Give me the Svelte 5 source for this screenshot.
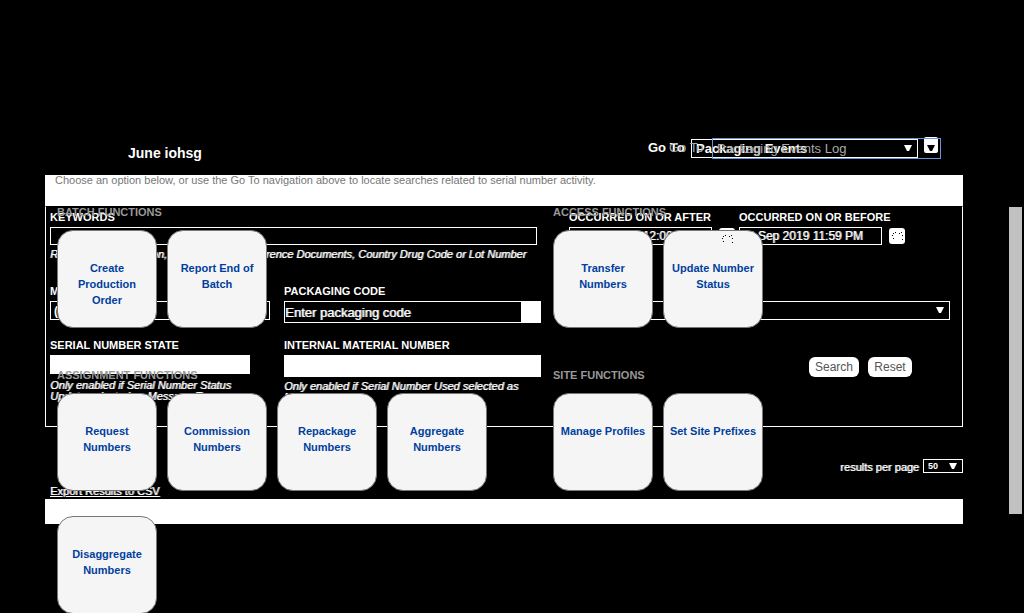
<script>
  const leftGroups = [
    { title: 'BATCH FUNCTIONS', items: ['Create Production Order', 'Report End of Batch'] },
    {
      title: 'ASSIGNMENT FUNCTIONS',
      items: ['Request Numbers', 'Commission Numbers', 'Repackage Numbers', 'Aggregate Numbers', 'Disaggregate Numbers']
    }
  ];
  const rightGroups = [
    { title: 'ACCESS FUNCTIONS', items: ['Transfer Numbers', 'Update Number Status'] },
    { title: 'SITE FUNCTIONS', items: ['Manage Profiles', 'Set Site Prefixes'] }
  ];
  const columns = [leftGroups, rightGroups];
</script>

{#snippet arrow()}
  <svg class="arrow" width="8" height="7" viewBox="0 0 8 7" aria-hidden="true"><path d="M0 0H8L5 6H3Z" fill="currentColor" /></svg>
{/snippet}

{#snippet dots()}
  <svg class="dots" width="14" height="10" viewBox="0 0 14 10" aria-hidden="true">
    <path d="M3 2h1v1H3zM5 1h1v1H5zM2 4h1v1H2zM9 2h1v1H9zM11 1h1v1h-1zM12 4h1v1h-1zM3 7h1v1H3zM12 8h1v1h-1z" fill="#000" />
  </svg>
{/snippet}

<div class="stage">
  <div class="layer">
    <header>
      <strong class="brand">June iohsg</strong>
      <div class="goto">
        <label for="goto">Go To</label>
        <span class="pick wide"><select id="goto"><option>Packaging Events</option></select>{@render arrow()}</span>
        <button class="go" aria-label="Go"></button>
      </div>
    </header>
    <div class="band"></div>
    <form onsubmit={(e) => e.preventDefault()}>
      <div class="field keywords">
        <label for="kw">KEYWORDS</label>
        <input id="kw" />
        <em>Related Event Location, Types, Status, Reference Documents, Country Drug Code or Lot Number</em>
      </div>
      <div class="dates">
        <div class="field">
          <label for="after">OCCURRED ON OR AFTER</label>
          <span class="date"><input id="after" value="01 Sep 2019 12:00 AM" /><button type="button" class="cal" aria-label="Pick date">{@render dots()}</button></span>
        </div>
        <div class="field">
          <label for="before">OCCURRED ON OR BEFORE</label>
          <span class="date"><input id="before" value="30 Sep 2019 11:59 PM" /><button type="button" class="cal" aria-label="Pick date">{@render dots()}</button></span>
        </div>
      </div>
      <div class="field message">
        <label for="msg">MESSAGE TYPE</label>
        <input id="msg" value="(All)" />
      </div>
      <div class="field code">
        <label for="code">PACKAGING CODE</label>
        <span class="lookup"><input id="code" value="Enter packaging code" /><button type="button" aria-label="Look up"></button></span>
      </div>
      <div class="field status">
        <label for="status">STATUS</label>
        <span class="pick"><select id="status"><option></option></select>{@render arrow()}</span>
      </div>
      <div class="field state">
        <label for="state">SERIAL NUMBER STATE</label>
        <input id="state" class="solid" disabled />
        <em>Only enabled if Serial Number Status<br />Update selected as Message Type</em>
      </div>
      <div class="field material">
        <label for="mat">INTERNAL MATERIAL NUMBER</label>
        <input id="mat" class="solid" disabled />
        <em>Only enabled if Serial Number Used selected as<br />Message Type</em>
      </div>
      <div class="actions">
        <button>Search</button>
        <button type="reset">Reset</button>
      </div>
    </form>
    <div class="paging">
      <label for="count">results per page</label>
      <span class="pick"><select id="count"><option>50</option></select>{@render arrow()}</span>
    </div>
    <a class="export" href="#export">Export Results to CSV</a>
    <div class="bar"></div>
  </div>

  <div class="layer over">
    <div class="goto second">
      <label for="goto2">Go To</label>
      <span class="pick"><select id="goto2"><option>Packaging Events Log</option></select>{@render arrow()}</span>
    </div>
    <p>Choose an option below, or use the Go To navigation above to locate searches related to serial number activity.</p>
    <div class="columns">
      {#each columns as groups}
        <div>
          {#each groups as group}
            <section>
              <h2>{group.title}</h2>
              <div class="tiles">
                {#each group.items as item}
                  <a href="#tile">{item}{#if item === 'Update Number Status'}{@render dots()}{/if}</a>
                {/each}
              </div>
            </section>
          {/each}
        </div>
      {/each}
    </div>
  </div>
  <div class="thumb"></div>
</div>

<style>
  :global(body) {
    background: #000;
    overflow: hidden;
  }
  .stage {
    position: relative;
    display: grid;
    height: 100vh;
    overflow: hidden;
    padding: 137px 61px 0 45px;
    box-sizing: border-box;
    color: #fff;
    font: 11px/16px "Liberation Sans", Arial, sans-serif;
  }
  .stage * {
    box-sizing: border-box;
  }
  .layer {
    grid-area: 1 / 1;
    min-width: 0;
  }
  header {
    display: flex;
    justify-content: space-between;
    height: 38px;
    padding: 0 25px 0 83px;
  }
  .brand {
    font-size: 14px;
    line-height: 32px;
  }
  .goto {
    display: flex;
    align-items: flex-start;
    font-size: 13px;
    line-height: 22px;
  }
  .goto label {
    width: 43px;
  }
  header .goto label {
    font-weight: bold;
  }
  .pick {
    display: grid;
    align-items: center;
    height: 19px;
    border: 1px solid #fff;
  }
  .pick select {
    grid-area: 1 / 1;
    width: 100%;
    height: 100%;
    appearance: none;
    border: 0;
    padding: 0 4px;
    background: transparent;
    color: inherit;
    font: inherit;
    line-height: 16px;
  }
  .arrow {
    grid-area: 1 / 1;
    justify-self: end;
    margin-right: 5px;
    pointer-events: none;
  }
  .wide {
    width: 227px;
    margin-top: 2px;
    font-weight: bold;
  }
  button {
    border: 0;
    padding: 0;
    background: #fff;
    color: #000;
    font: 12px "Liberation Sans", Arial, sans-serif;
  }
  .go {
    width: 14px;
    height: 16px;
    margin-left: 6px;
    border-radius: 2px;
  }
  .band {
    height: 31px;
    background: #fff;
  }
  form {
    display: grid;
    grid-template-columns: 234px 285px 1fr;
    grid-template-rows: 74px 54px 1fr;
    height: 221px;
    padding: 2px 12px 0 4px;
    border: 1px solid #fff;
    border-top-color: #000;
  }
  .field {
    display: flex;
    flex-direction: column;
    align-items: flex-start;
    min-width: 0;
    white-space: nowrap;
  }
  .field label {
    font-weight: bold;
    line-height: 16px;
    margin-bottom: 2px;
  }
  .field em,
  .date input,
  .lookup input,
  .paging label,
  .export {
    text-shadow: 1px 0 0 rgb(255 255 255 / 0.7);
  }
  .field em {
    line-height: 11px;
    padding-top: 4px;
  }
  input {
    height: 18px;
    border: 1px solid #fff;
    border-radius: 0;
    padding: 0 3px;
    background: #000;
    color: #fff;
    font: 12px "Liberation Sans", Arial, sans-serif;
  }
  .keywords {
    grid-column: span 2;
  }
  .keywords input {
    width: calc(100% - 32px);
  }
  .dates {
    display: flex;
    gap: 4px;
  }
  .date {
    display: flex;
    align-items: center;
    gap: 7px;
  }
  .date input {
    width: 143px;
    padding: 0 1px;
  }
  .cal {
    display: grid;
    place-items: center;
    width: 16px;
    height: 16px;
    border-radius: 3px;
  }
  .message input {
    width: calc(100% - 14px);
    height: 19px;
    font-weight: bold;
  }
  .lookup {
    display: flex;
    width: 257px;
  }
  .lookup input {
    flex: 1;
    min-width: 0;
    height: 22px;
    padding: 0;
    font-size: 13px;
  }
  .lookup button {
    width: 19px;
  }
  .status .pick {
    width: 100%;
  }
  .state input {
    width: 200px;
    height: 19px;
  }
  .state em {
    padding-top: 6px;
  }
  .material input {
    width: 257px;
    height: 22px;
  }
  input.solid {
    background: #fff;
  }
  .actions {
    display: flex;
    justify-content: flex-end;
    gap: 9px;
    padding: 20px 38px 0 0;
  }
  .actions button {
    height: 20px;
    width: 50px;
    border-radius: 6px;
    color: #555;
  }
  .actions button + button {
    width: 44px;
  }
  .paging {
    display: flex;
    justify-content: flex-end;
    gap: 4px;
    height: 57px;
    padding-top: 32px;
  }
  .paging .pick {
    width: 40px;
    height: 14px;
    font-size: 9px;
    font-weight: bold;
  }
  .paging select {
    line-height: 12px;
  }
  .export {
    display: block;
    height: 15px;
    padding-left: 5px;
    color: #fff;
    line-height: 14px;
  }
  .bar {
    height: 25px;
    background: #fff;
  }
  .over {
    pointer-events: none;
  }
  .over a,
  .over select {
    pointer-events: auto;
  }
  .second {
    justify-content: flex-end;
    height: 35px;
    padding-right: 22px;
    color: #aaa;
  }
  .second .pick {
    width: 229px;
    height: 21px;
    margin-top: 1px;
    border-color: #6a94e0;
  }
  .second .arrow {
    margin-right: 5px;
    color: #000;
  }
  p {
    height: 32px;
    margin: 0;
    padding-left: 10px;
    color: #777;
  }
  .columns {
    display: grid;
    grid-template-columns: 430px 1fr;
    gap: 66px;
    padding-left: 12px;
  }
  section {
    margin-bottom: 14px;
  }
  h2 {
    margin: 0 0 10px;
    color: #999;
    font-size: 11px;
    line-height: 16px;
  }
  .tiles {
    display: flex;
    flex-wrap: wrap;
    gap: 0 10px;
  }
  .tiles a {
    position: relative;
    width: 100px;
    height: 98px;
    margin-bottom: 25px;
    padding: 29px 5px 0;
    border: 1px solid #777;
    border-radius: 16px;
    background: #f5f5f5;
    color: #003f9e;
    font-weight: bold;
    text-align: center;
    text-decoration: none;
  }
  .tiles .dots {
    position: absolute;
    top: 3px;
    right: 28px;
  }
  .thumb {
    position: absolute;
    top: 207px;
    right: 2px;
    width: 13px;
    height: 307px;
    background: #c1c1c1;
  }
</style>
